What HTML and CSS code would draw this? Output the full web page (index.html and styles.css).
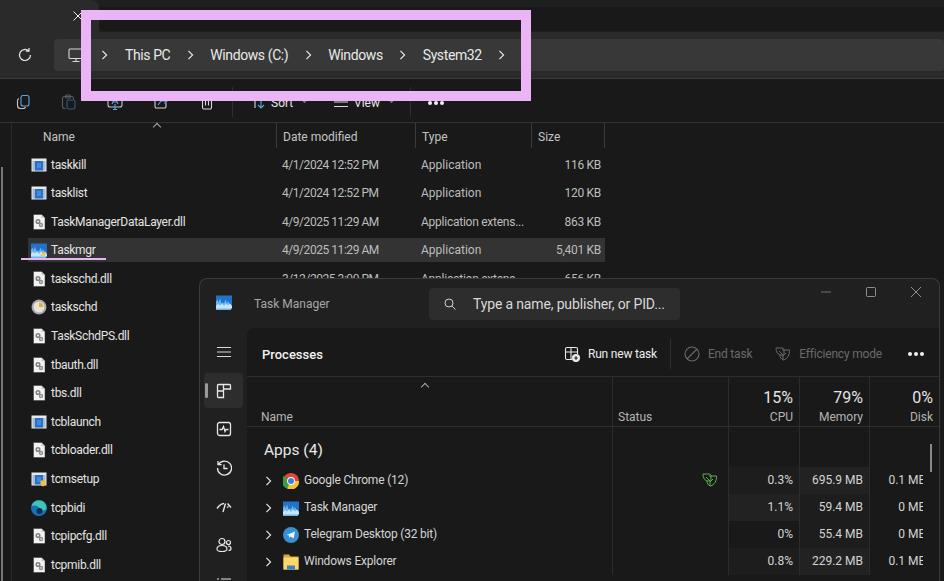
FILE: index.html
```html
<!DOCTYPE html>
<html lang="en">
<head>
    <meta charset="UTF-8">
    <title>System32 - File Explorer</title>
    <link rel="stylesheet" href="styles.css">
</head>
<body>
    <svg class="sprite" xmlns="http://www.w3.org/2000/svg">
        <symbol id="chev" viewBox="0 0 8 12" fill="none" stroke="currentColor" stroke-width="1.400">
            <path d="M1.500 1l5 5-5 5"/>
        </symbol>
        <symbol id="exe" viewBox="0 0 16 16">
            <rect x="0.500" y="1.500" width="15" height="13" fill="#e6eaee"/>
            <rect x="1.500" y="4" width="13" height="9.500" fill="#a9bccf"/>
            <rect x="4" y="4" width="8" height="9.500" fill="#2a6fc8"/>
            <rect x="6" y="6" width="4" height="5" fill="#3f8be0"/>
        </symbol>
        <symbol id="dll" viewBox="0 0 16 16">
            <path d="M2.500 0.500h8l3.500 3.500v11.500h-11.500z" fill="#f2f2f2" stroke="#333" stroke-width="0.500"/>
            <path d="M10.500 0.500v3.500h3.500z" fill="#c8c8c8"/>
            <circle cx="7" cy="7.500" r="1.800" fill="none" stroke="#7e7e7e" stroke-width="1.500"/>
            <circle cx="10" cy="11" r="1.500" fill="none" stroke="#8e8e8e" stroke-width="1.400"/>
        </symbol>
        <symbol id="taskmgr" viewBox="0 0 16 16">
            <rect y="1.500" width="16" height="13" fill="#2272cc"/>
            <path d="M0 8l1.500-2.500 1 3 1.500-4 1.500 5 1.500-1 1 1 1.500-4 1.500 4 1-2.500 1.500 2.500 1.500 2v5h-16z" fill="#6fb6ee"/>
            <path d="M0 12l2-2 2 1.500 2-2 2 2.500 2-2.500 2 2 2-2 2 2.500v2.500h-16z" fill="#c8e6fb"/>
        </symbol>
        <symbol id="chrome" viewBox="0 0 16 16">
            <circle cx="8" cy="8" r="8" fill="#e0463a"/>
            <path d="M8 8l-3.900 7.500a8 8 0 0 1-3.600-12.500z" fill="#3a9c4a"/>
            <path d="M8 8h8a8 8 0 0 1-11.900 7.500z" fill="#f4c430"/>
            <circle cx="8" cy="8" r="3.900" fill="#fff"/>
            <circle cx="8" cy="8" r="3" fill="#3f7de0"/>
        </symbol>
        <symbol id="telegram" viewBox="0 0 16 16">
            <circle cx="8" cy="8" r="8" fill="#3a8fd0"/>
            <path d="M3.500 8l8.500-3.500-1.300 7-3-2-1.300 1.500-.3-2.500z" fill="#e8f3fb"/>
        </symbol>
        <symbol id="folder" viewBox="0 0 16 16">
            <path d="M0.500 0.500h5.500l1.500 2h8v13h-15z" fill="#d8a83a"/>
            <rect x="0.500" y="3.500" width="15" height="12" fill="#f8d868"/>
            <rect x="4" y="11.500" width="8" height="4" fill="#3a82c8"/>
        </symbol>
        <symbol id="leaf" viewBox="0 0 16 16" fill="none" stroke="currentColor" stroke-width="1">
            <path d="M1 2h6c1.200 0 2 .8 2 2v3c0 1-1 2-2 2h-1c-3 0-5-3-5-7z"/>
            <path d="M7 4h7.500c.3 4.500-2 9-6 10-2.500-.5-3.500-3-3.500-5"/>
            <path d="M4 5l4 4v5M8 10l3-3"/>
        </symbol>
    </svg>

    <div class="explorer">
        <div class="tabbar">
            <div class="tab">
                <svg class="tab-close" viewBox="0 0 10 10" fill="none" stroke="#eee"><path d="M0.500 0.500l9 9M9.500 0.500l-9 9"/></svg>
            </div>
            <div class="tab-rest"></div>
        </div>

        <div class="addressbar">
            <svg class="icon refresh" viewBox="0 0 16 16" fill="none" stroke="#e6e6e6" stroke-width="1.200">
                <path d="M13.500 8a5.500 5.500 0 1 1-1.800-4.100M12 1v3.200H8.800"/>
            </svg>
            <div class="address">
                <svg class="icon pc" viewBox="0 0 16 16" fill="none" stroke="#d8d8d8" stroke-width="1.100">
                    <rect x="1" y="2" width="14" height="9.500" rx="1"/>
                    <path d="M8 11.500v2.500M4.500 14.500h7"/>
                </svg>
                <span class="crumb-sep first"><svg><use href="#chev"/></svg></span>
                <span class="crumb">This PC</span>
                <span class="crumb-sep"><svg><use href="#chev"/></svg></span>
                <span class="crumb">Windows (C:)</span>
                <span class="crumb-sep"><svg><use href="#chev"/></svg></span>
                <span class="crumb">Windows</span>
                <span class="crumb-sep"><svg><use href="#chev"/></svg></span>
                <span class="crumb">System32</span>
                <span class="crumb-sep"><svg><use href="#chev"/></svg></span>
            </div>
        </div>

        <div class="toolbar">
            <svg class="icon tool" viewBox="0 0 16 16" fill="none" stroke="#5aa6e0" stroke-width="1.100">
                <rect x="6" y="1.500" width="8" height="10.500" rx="2"/>
                <path d="M4 4.500c-1 .4-1.500 1-1.500 2v5c0 1.800 1.200 3 3 3h3c1 0 1.600-.5 2-1.500" stroke="#c8c8c8"/>
            </svg>
            <svg class="icon tool" viewBox="0 0 16 16" fill="none" stroke="#5c5c5c" stroke-width="1.100">
                <path d="M4.500 14.500h-1a2 2 0 0 1-2-2v-8a2 2 0 0 1 2-2h7a2 2 0 0 1 2 2v1"/>
                <rect x="6" y="6" width="8" height="9" rx="1.500" stroke="#2e5c80"/>
                <rect x="4.500" y="1" width="5" height="3" rx="1"/>
            </svg>
            <svg class="icon tool" viewBox="0 0 16 16" fill="none" stroke="#b8c8d8" stroke-width="1.100">
                <rect x="1" y="2" width="14" height="11" rx="2"/>
                <path d="M5 10l3-6 3 6M6 8h4M8 10v5.500M6 15.500h4" stroke="#5aa6e0"/>
            </svg>
            <svg class="icon tool" viewBox="0 0 16 16" fill="none" stroke="#d0d0d0" stroke-width="1.100">
                <path d="M13 9v3.500a1.500 1.500 0 0 1-1.500 1.500h-8a1.500 1.500 0 0 1-1.500-1.500v-8a1.500 1.500 0 0 1 1.500-1.500h3"/>
                <path d="M5 11l3-4h6M11.500 4.500l2.500 2.500-2.500 2.500" stroke="#5aa6e0"/>
            </svg>
            <svg class="icon tool" viewBox="0 0 16 16" fill="none" stroke="#d8d8d8" stroke-width="1.100">
                <path d="M2 3.500h12M5.500 3.500v-1.500h5v1.500M3.500 3.500v10a1.500 1.500 0 0 0 1.500 1.500h6a1.500 1.500 0 0 0 1.500-1.500v-10M6.500 6.500v5M9.500 6.500v5"/>
            </svg>
            <span class="tool-sep"></span>
            <span class="tool-menu sort">
                <svg class="icon" viewBox="0 0 16 16" fill="none" stroke="#d8d8d8" stroke-width="1.100">
                    <path d="M5 14v-12M2 5l3-3 3 3"/>
                    <path d="M11 2v12M8 11l3 3 3-3" stroke="#5aa6e0"/>
                </svg>
                <span>Sort</span> <i class="caret"></i>
            </span>
            <span class="tool-menu view">
                <svg class="icon" viewBox="0 0 16 16" fill="none" stroke="#d8d8d8" stroke-width="1.100">
                    <path d="M1 3.500h14M1 8h14M1 12.500h14"/>
                </svg>
                <span>View</span> <i class="caret"></i>
            </span>
            <span class="tool-sep"></span>
            <span class="dots"><i></i><i></i><i></i></span>
        </div>

        <div class="content">
            <div class="navpane"><div class="nav-thumb"></div></div>
            <div class="files">
                <div class="files-head">
                    <span class="col-name">Name<i class="sort-up"></i></span>
                    <span>Date modified</span>
                    <span>Type</span>
                    <span>Size</span>
                </div>
                <div class="file">
                    <span class="file-name"><svg class="ficon"><use href="#exe"/></svg>taskkill</span>
                    <span class="file-date">4/1/2024 12:52 PM</span><span>Application</span><span class="file-size">116 KB</span>
                </div>
                <div class="file">
                    <span class="file-name"><svg class="ficon"><use href="#exe"/></svg>tasklist</span>
                    <span class="file-date">4/1/2024 12:52 PM</span><span>Application</span><span class="file-size">120 KB</span>
                </div>
                <div class="file">
                    <span class="file-name"><svg class="ficon"><use href="#dll"/></svg>TaskManagerDataLayer.dll</span>
                    <span class="file-date">4/9/2025 11:29 AM</span><span class="file-ext">Application extens...</span><span class="file-size">863 KB</span>
                </div>
                <div class="file selected">
                    <span class="file-name">
                        <svg class="ficon" viewBox="0 0 16 16">
                            <use href="#taskmgr" width="16" height="16"/>
                            <path d="M9 13.500l3-1.500-1-1 4-1-1 4-1-1-3 1.500z" fill="#f2c230"/>
                        </svg>Taskmgr
                    </span>
                    <span class="file-date">4/9/2025 11:29 AM</span><span>Application</span><span class="file-size">5,401 KB</span>
                </div>
                <div class="file">
                    <span class="file-name"><svg class="ficon"><use href="#dll"/></svg>taskschd.dll</span>
                    <span class="file-date">3/12/2025 3:00 PM</span><span class="file-ext">Application extens...</span><span class="file-size">656 KB</span>
                </div>
                <div class="file">
                    <span class="file-name">
                        <svg class="ficon" viewBox="0 0 16 16">
                            <circle cx="8" cy="8" r="7.500" fill="#a8a8a8"/>
                            <circle cx="8" cy="8" r="5.500" fill="#e8e4d8"/>
                            <path d="M8 8v-4.500a4.500 4.500 0 0 1 4.500 4.500z" fill="#e0b040"/>
                        </svg>taskschd
                    </span>
                </div>
                <div class="file"><span class="file-name"><svg class="ficon"><use href="#dll"/></svg>TaskSchdPS.dll</span></div>
                <div class="file"><span class="file-name"><svg class="ficon"><use href="#dll"/></svg>tbauth.dll</span></div>
                <div class="file"><span class="file-name"><svg class="ficon"><use href="#dll"/></svg>tbs.dll</span></div>
                <div class="file"><span class="file-name"><svg class="ficon"><use href="#exe"/></svg>tcblaunch</span></div>
                <div class="file"><span class="file-name"><svg class="ficon"><use href="#dll"/></svg>tcbloader.dll</span></div>
                <div class="file">
                    <span class="file-name">
                        <svg class="ficon" viewBox="0 0 16 16">
                            <use href="#exe" width="16" height="16"/>
                            <path d="M9.500 9.500h5v3c0 1.500-1.200 2.500-2.500 3-1.300-.5-2.500-1.500-2.500-3z" fill="#f2c230"/>
                        </svg>tcmsetup
                    </span>
                </div>
                <div class="file">
                    <span class="file-name">
                        <svg class="ficon" viewBox="0 0 16 16">
                            <circle cx="8" cy="8" r="8" fill="#1c6fb8"/>
                            <path d="M0.500 6c1.500-4.500 5-6 8.500-5.500 3.800.6 6.500 3.500 6.500 7.500 0 1.500-1.500 2.500-3.500 2.500s-3.500-.5-3.500-2c0-2-4.500-4-8-2.500z" fill="#3ec6b4"/>
                            <circle cx="8.500" cy="11" r="3" fill="#0e2f50"/>
                        </svg>tcpbidi
                    </span>
                </div>
                <div class="file"><span class="file-name"><svg class="ficon"><use href="#dll"/></svg>tcpipcfg.dll</span></div>
                <div class="file"><span class="file-name"><svg class="ficon"><use href="#dll"/></svg>tcpmib.dll</span></div>
            </div>
        </div>
    </div>

    <div class="pink-box"></div>
    <div class="pink-line"></div>

    <div class="taskmgr">
        <div class="tm-title">
            <svg class="tm-logo"><use href="#taskmgr"/></svg>
            <span class="tm-name">Task Manager</span>
            <div class="tm-search">
                <svg viewBox="0 0 12 12" fill="none" stroke="#cfcfcf" stroke-width="1">
                    <circle cx="5" cy="5" r="4"/><path d="M8 8l3.500 3.500"/>
                </svg>
                <span>Type a name, publisher, or PID...</span>
            </div>
            <div class="tm-controls">
                <svg viewBox="0 0 10 10" stroke="#6e6e6e" fill="none"><path d="M0 5h10"/></svg>
                <svg viewBox="0 0 10 10" stroke="#8e8e8e" fill="none"><rect x="0.500" y="0.500" width="9" height="9" rx="1"/></svg>
                <svg viewBox="0 0 10 10" stroke="#8e8e8e" fill="none"><path d="M0 0l10 10M10 0l-10 10"/></svg>
            </div>
        </div>
        <div class="tm-body">
            <div class="tm-side">
                <div class="side-item">
                    <svg viewBox="0 0 16 16" fill="none" stroke="#d8d8d8" stroke-width="1"><path d="M1 3.500h14M1 8h14M1 12.500h14"/></svg>
                </div>
                <div class="side-item active">
                    <svg viewBox="0 0 16 16" fill="none" stroke="#e8e8e8" stroke-width="1.300">
                        <path d="M2.500 1.500h5v6.500h-6v-5.500a1 1 0 0 1 1-1zM7.500 1.500h6a1 1 0 0 1 1 1v3.500h-7zM1.500 8h6v6.500h-5a1 1 0 0 1-1-1z"/>
                    </svg>
                </div>
                <div class="side-item">
                    <svg viewBox="0 0 16 16" fill="none" stroke="#e8e8e8" stroke-width="1.300">
                        <rect x="1.500" y="1.500" width="13" height="13" rx="2"/><path d="M3.500 8.500h2.500l1.500-3 1.500 5 1-2h2.500"/>
                    </svg>
                </div>
                <div class="side-item">
                    <svg viewBox="0 0 16 16" fill="none" stroke="#e8e8e8" stroke-width="1.300">
                        <path d="M2.500 4.500a7 7 0 1 1-1 3.500M2 1v3.700h3.700M8 4.500v4h3.500"/>
                    </svg>
                </div>
                <div class="side-item">
                    <svg viewBox="0 0 16 16" fill="none" stroke="#e8e8e8" stroke-width="1.400">
                        <path d="M1 9.500l2-2.500c1.500-1.500 3-2.500 5-2.500M7 13l2.500-8.500M11.500 4.500l3.500 4M11 8.500l1.500-1"/>
                    </svg>
                </div>
                <div class="side-item">
                    <svg viewBox="0 0 16 16" fill="none" stroke="#e8e8e8" stroke-width="1.200">
                        <circle cx="6" cy="4.500" r="3"/><circle cx="12.500" cy="5.500" r="2"/>
                        <path d="M1 12c0-2 1.500-3.500 5-3.500s5 1.500 5 3.500-1.500 2.500-5 2.500-5-.5-5-2.500zM12 9c2 0 3 1 3 2.500s-1 2-2.500 2"/>
                    </svg>
                </div>
                <div class="side-item">
                    <svg viewBox="0 0 16 16" fill="none" stroke="#e8e8e8" stroke-width="1.200"><path d="M5 3h10M5 8h10M5 13h10M1 3h2M1 8h2M1 13h2"/></svg>
                </div>
            </div>
            <div class="tm-panel">
                <div class="tm-toolbar">
                    <h2>Processes</h2>
                    <div class="tm-action run">
                        <svg viewBox="0 0 16 16" fill="none" stroke="#e8e8e8" stroke-width="1.100">
                            <path d="M8 13.500h-5a1.500 1.500 0 0 1-1.500-1.500v-9a1.500 1.500 0 0 1 1.500-1.500h9a1.500 1.500 0 0 1 1.500 1.500v5M1.500 6h12M7 1.500v12"/>
                            <circle cx="12" cy="12" r="3.500" fill="#e8e8e8"/>
                            <path d="M10.300 12h3.400M12 10.300v3.400" stroke="#191919"/>
                        </svg>
                        Run new task
                    </div>
                    <span class="tm-sep"></span>
                    <div class="tm-action off">
                        <svg viewBox="0 0 16 16" fill="none" stroke="#6a6a6a" stroke-width="1.100"><circle cx="8" cy="8" r="7"/><path d="M3 13l10-10"/></svg>
                        End task
                    </div>
                    <div class="tm-action off eff">
                        <svg><use href="#leaf"/></svg>
                        Efficiency mode
                    </div>
                    <span class="dots tm-dots"><i></i><i></i><i></i></span>
                </div>

                <div class="tm-row tm-head">
                    <div class="cell name-cell"><i class="sort-up"></i><span class="head-label">Name</span></div>
                    <div class="cell status-cell"><span class="head-label">Status</span></div>
                    <div class="cell num"><b>15%</b><span class="head-label">CPU</span></div>
                    <div class="cell num"><b>79%</b><span class="head-label">Memory</span></div>
                    <div class="cell num disk-head"><b>0%</b><span class="head-label">Disk</span></div>
                </div>

                <div class="tm-row group-row">
                    <div class="cell name-cell group">Apps (4)</div>
                    <div class="cell"></div><div class="cell"></div><div class="cell"></div><div class="cell"></div>
                </div>

                <div class="tm-row proc">
                    <div class="cell name-cell"><svg class="expander"><use href="#chev"/></svg><svg class="picon"><use href="#chrome"/></svg>Google Chrome (12)</div>
                    <div class="cell status-cell"><svg class="leaf"><use href="#leaf"/></svg></div>
                    <div class="cell val heat1">0.3%</div>
                    <div class="cell val heat2">695.9 MB</div>
                    <div class="cell val disk"><span>0.1 MB</span></div>
                </div>
                <div class="tm-row proc">
                    <div class="cell name-cell"><svg class="expander"><use href="#chev"/></svg><svg class="picon"><use href="#taskmgr"/></svg>Task Manager</div>
                    <div class="cell status-cell"></div>
                    <div class="cell val heat2">1.1%</div>
                    <div class="cell val heat1">59.4 MB</div>
                    <div class="cell val disk"><span>0 MB</span></div>
                </div>
                <div class="tm-row proc">
                    <div class="cell name-cell"><svg class="expander"><use href="#chev"/></svg><svg class="picon"><use href="#telegram"/></svg>Telegram Desktop (32 bit)</div>
                    <div class="cell status-cell"></div>
                    <div class="cell val">0%</div>
                    <div class="cell val heat1">55.4 MB</div>
                    <div class="cell val disk"><span>0 MB</span></div>
                </div>
                <div class="tm-row proc">
                    <div class="cell name-cell"><svg class="expander"><use href="#chev"/></svg><svg class="picon"><use href="#folder"/></svg>Windows Explorer</div>
                    <div class="cell status-cell"></div>
                    <div class="cell val heat1">0.8%</div>
                    <div class="cell val heat2">229.2 MB</div>
                    <div class="cell val disk"><span>0.1 MB</span></div>
                </div>
                <div class="tm-scroll"></div>
            </div>
        </div>
    </div>
</body>
</html>
```

FILE: styles.css
```css
html, body {
    margin: 0;
    padding: 0;
    width: 944px;
    height: 581px;
    overflow: hidden;
}

body {
    position: relative;
    background: #191919;
    color: #e4e4e4;
    font-family: Roboto, "Open Sans", sans-serif;
    font-size: 12px;
}

.sprite {
    position: absolute;
    width: 0;
    height: 0;
}

.icon {
    width: 16px;
    height: 16px;
    flex: none;
}

/* explorer */
.explorer {
    display: flex;
    flex-direction: column;
    height: 581px;
    overflow: hidden;
}

.tabbar {
    height: 32px;
    background: #1f1f1f;
    flex: none;
    display: flex;
    align-items: flex-end;
}

.tab {
    width: 99px;
    height: 32px;
    background: #2a2a2a;
    border-radius: 0 8px 0 0;
    display: flex;
    justify-content: flex-end;
    align-items: center;
    padding-right: 16px;
    box-sizing: border-box;
}

.tab-close {
    width: 10px;
    height: 10px;
}

.tab-rest {
    flex: 1;
    height: 24px;
    background: #191919;
    border-radius: 0 0 0 6px;
    margin-bottom: 1px;
}

.addressbar {
    height: 47px;
    background: #2a2a2a;
    border-bottom: 1px solid #3a3a3a;
    box-sizing: border-box;
    display: flex;
    align-items: center;
    padding-left: 17px;
    flex: none;
}

.refresh {
    margin-right: 21px;
}

.address {
    flex: 1;
    height: 32px;
    background: #383838;
    border-radius: 4px;
    display: flex;
    align-items: center;
    padding-left: 14px;
    font-size: 14px;
    letter-spacing: -0.4px;
}

.crumb {
    color: #e8e8e8;
}

.crumb-sep {
    width: 40px;
    display: flex;
    justify-content: center;
    color: #e8e8e8;
}

.crumb-sep svg {
    width: 7px;
    height: 10px;
}

.crumb-sep.first {
    width: 41px;
}

.toolbar {
    height: 44px;
    flex: none;
    background: #191919;
    border-bottom: 1px solid #333;
    box-sizing: border-box;
    display: flex;
    align-items: center;
    padding: 2px 0 0 15px;
}

.toolbar .dots {
    margin-top: 3px;
}

.tool {
    margin-right: 30px;
}

.tool-sep {
    width: 1px;
    height: 30px;
    background: #2e2e2e;
    margin-left: -13px;
    margin-right: 17px;
}

.tool-menu {
    display: flex;
    align-items: center;
    gap: 5px;
    color: #e4e4e4;
}

.tool-menu span {
    margin-top: 2px;
}

.sort {
    width: 83px;
}

.view {
    width: 90px;
}

.caret {
    width: 4px;
    height: 4px;
    border-right: 1px solid #888;
    border-bottom: 1px solid #888;
    transform: rotate(45deg);
    margin: -4px 0 0 4px;
}

.dots {
    display: flex;
    gap: 2px;
    flex: none;
}

.dots i {
    width: 4px;
    height: 4px;
    border-radius: 50%;
    background: #f0f0f0;
}

.content {
    flex: 1;
    display: flex;
    min-height: 0;
}

.navpane {
    width: 11px;
    border-right: 1px solid #2a2a2a;
    flex: none;
    padding-top: 44px;
}

.nav-thumb {
    width: 2px;
    height: 450px;
    margin-left: 1px;
    background: #777;
}

.files {
    flex: 1;
    padding-left: 16px;
}

.files-head,
.file {
    display: grid;
    grid-template-columns: 248px 139px 116px 74px;
    width: 577px;
}

.files-head {
    height: 25px;
    color: #c4c4c4;
    margin-bottom: 4.500px;
}

.files-head span {
    position: relative;
    height: 25px;
    line-height: 29px;
    padding-left: 6px;
    border-left: 1px solid #3a3a3a;
}

.files-head span:last-child {
    border-right: 1px solid #3a3a3a;
}

.files-head .col-name {
    border-left: 0;
    padding-left: 15px;
}

.sort-up {
    position: absolute;
    width: 5px;
    height: 5px;
    border-left: 1px solid #aaa;
    border-top: 1px solid #aaa;
    transform: rotate(45deg);
    left: 126px;
    top: 1px;
}

.file {
    height: 24px;
    line-height: 24px;
    margin-bottom: 4.600px;
    color: #bdbdbd;
}

.file span {
    padding-left: 6px;
    white-space: nowrap;
}

.file .file-name {
    display: flex;
    align-items: center;
    gap: 4px;
    padding-left: 3px;
    color: #e4e4e4;
    letter-spacing: -0.3px;
}

.file .file-date {
    letter-spacing: -0.45px;
}

.file .file-ext {
    letter-spacing: -0.25px;
}

.file .file-size {
    text-align: right;
    padding-right: 4px;
    letter-spacing: -0.3px;
}

.ficon {
    width: 16px;
    height: 16px;
    flex: none;
}

.selected {
    background: #333;
}

/* annotations */
.pink-box {
    position: absolute;
    left: 81px;
    top: 9.500px;
    width: 450px;
    height: 91px;
    box-sizing: border-box;
    border: 10px solid #eab4f6;
}

.pink-line {
    position: absolute;
    left: 21px;
    top: 258px;
    width: 85px;
    height: 2px;
    background: #eab4f6;
}

/* task manager */
.taskmgr {
    position: absolute;
    left: 199px;
    top: 278px;
    width: 741px;
    height: 303px;
    box-sizing: border-box;
    background: #202020;
    border: 1px solid #3a3a3a;
    border-bottom: 0;
    border-radius: 8px 8px 0 0;
    display: flex;
    flex-direction: column;
    overflow: hidden;
}

.tm-title {
    height: 49px;
    flex: none;
    display: flex;
    align-items: center;
    padding-left: 16px;
}

.tm-logo {
    width: 16px;
    height: 16px;
    margin-top: -4px;
}

.tm-name {
    margin-left: 22px;
    color: #a8a8a8;
    font-size: 12px;
    width: 175px;
    margin-top: 1px;
}

.tm-search {
    width: 251px;
    height: 32px;
    background: #2d2d2d;
    border-radius: 4px;
    display: flex;
    align-items: center;
    gap: 17px;
    padding-left: 15px;
    box-sizing: border-box;
    font-size: 14px;
    letter-spacing: -0.15px;
    color: #d8d8d8;
    white-space: nowrap;
}

.tm-search svg {
    width: 12px;
    height: 12px;
    flex: none;
}

.tm-controls {
    margin-left: auto;
    display: flex;
    gap: 35px;
    padding-right: 18px;
    margin-top: -23px;
}

.tm-controls svg {
    width: 10px;
    height: 10px;
}

.tm-body {
    flex: 1;
    display: flex;
    min-height: 0;
}

.tm-side {
    width: 47px;
    flex: none;
    display: flex;
    flex-direction: column;
    align-items: center;
    padding-top: 6.500px;
}

.side-item {
    position: relative;
    width: 39px;
    height: 35px;
    flex: none;
    margin-bottom: 3.700px;
    display: flex;
    align-items: center;
    justify-content: center;
    border-radius: 4px;
}

.side-item svg {
    width: 16px;
    height: 16px;
}

.side-item.active {
    background: #2d2d2d;
}

.side-item.active::before {
    content: "";
    position: absolute;
    left: 1px;
    top: 10px;
    width: 3px;
    height: 15px;
    border-radius: 2px;
    background: #9a9a9a;
}

.tm-panel {
    position: relative;
    flex: 1;
    background: #191919;
    border-radius: 8px 0 0 0;
    min-width: 0;
}

.tm-toolbar {
    height: 49px;
    border-bottom: 1px solid #2e2e2e;
    box-sizing: border-box;
    display: flex;
    align-items: center;
    padding: 4px 0 0 15px;
}

.tm-toolbar h2 {
    margin: 0;
    font-size: 13px;
    font-weight: 500;
    color: #f2f2f2;
    width: 302px;
}

.tm-action {
    display: flex;
    align-items: center;
    gap: 8px;
    white-space: nowrap;
    letter-spacing: -0.2px;
}

.tm-action svg {
    width: 16px;
    height: 16px;
}

.run {
    color: #ececec;
}

.tm-sep {
    width: 1px;
    height: 30px;
    background: #2e2e2e;
    margin: 0 13px;
}

.off {
    color: #6a6a6a;
}

.eff {
    margin-left: 23px;
}

.tm-dots {
    margin-left: 26px;
}

.tm-row {
    display: grid;
    grid-template-columns: 365px 116px 71px 70px 54px;
}

.cell {
    border-left: 1px solid #2c2c2c;
    box-sizing: border-box;
}

.name-cell {
    border-left: 0;
}

.tm-head {
    height: 50px;
    border-bottom: 1px solid #2e2e2e;
    box-sizing: border-box;
}

.tm-head .cell {
    position: relative;
    display: flex;
    flex-direction: column;
    justify-content: flex-end;
    padding-bottom: 2px;
}

.tm-head .name-cell {
    padding-left: 14px;
}

.tm-head .sort-up {
    left: 175px;
    top: 7px;
}

.tm-head .status-cell {
    padding-left: 5px;
}

.head-label {
    color: #b4b4b4;
    white-space: nowrap;
}

.num {
    align-items: flex-end;
    padding-right: 6px;
}

.num b {
    font-size: 16px;
    font-weight: 400;
    color: #e4e4e4;
    line-height: 22px;
    margin-bottom: 1px;
}

.disk-head {
    padding-right: 0;
    white-space: nowrap;
}

.disk-head b,
.disk-head span {
    margin-right: -10px;
}

.group-row {
    height: 40px;
}

.group {
    padding: 14px 0 0 17px;
    font-size: 15.500px;
    color: #e8e8e8;
}

.proc {
    height: 27px;
    line-height: 27px;
}

.proc .name-cell {
    display: flex;
    align-items: center;
    padding-left: 18px;
    color: #d4d4d4;
    white-space: nowrap;
    letter-spacing: -0.2px;
}

.expander {
    width: 7px;
    height: 10px;
    margin-right: 11px;
    color: #e4e4e4;
    flex: none;
}

.picon {
    width: 16px;
    height: 16px;
    margin-right: 5px;
    flex: none;
}

.tm-action svg use {
    color: #6a6a6a;
}

.leaf {
    position: absolute;
    width: 16px;
    height: 16px;
    color: #5fb14f;
    margin: 5px 0 0 89px;
}

.val {
    text-align: right;
    padding-right: 6px;
    color: #d4d4d4;
    white-space: nowrap;
}

.disk {
    overflow: hidden;
    padding-right: 0;
}

.disk span {
    display: inline-block;
    margin-right: -3px;
}

.heat1 {
    background: #1d1d1d;
}

.heat2 {
    background: #222;
}

.tm-scroll {
    position: absolute;
    right: 7px;
    top: 116px;
    width: 2px;
    height: 28px;
    background: #8a8a8a;
}
```
